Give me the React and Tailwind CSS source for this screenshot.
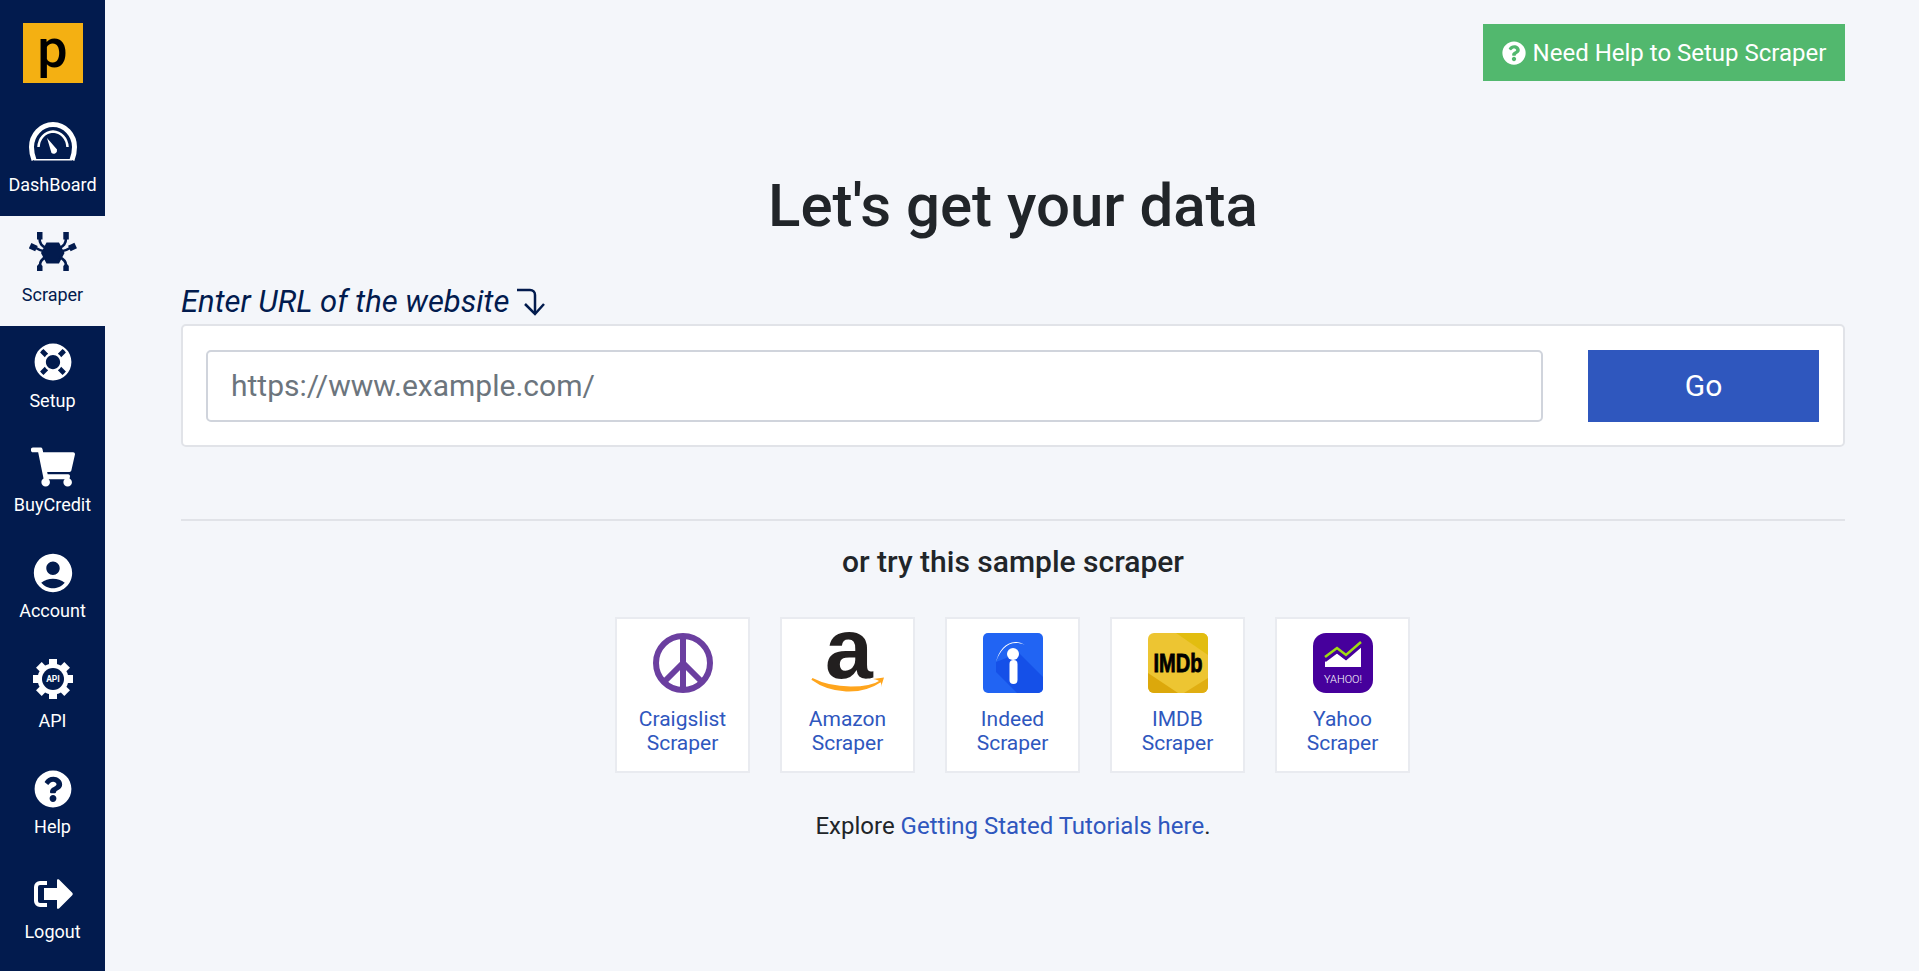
import React from "react";
import { FaLifeRing, FaShoppingCart, FaQuestionCircle } from "react-icons/fa";
import { MdAccountCircle } from "react-icons/md";

const NAVY = "#021b4e";

function Gauge() {
  return (
    <svg width="48" height="39" viewBox="0 0 48 39">
      <path d="M5 38 C3 33 2.500 29.500 2.500 25 C2.500 13 12 2.500 24 2.500 C36 2.500 45.500 13 45.500 25 C45.500 29.500 45 33 43 38" fill="none" stroke="#fff" strokeWidth="5" />
      <path d="M5 37.800 H43" stroke="#fff" strokeWidth="1.400" />
      <path d="M9.500 25 C10 16 16 10 24 9.500 C32 10 38 16 38.500 25" fill="none" stroke="#fff" strokeWidth="2.500" />
      <path d="M18 16 L28 27.500 A3.500 3.500 0 0 1 22.500 31 Z" fill="#fff" />
    </svg>
  );
}

function Spider({ color }) {
  return (
    <svg width="48" height="39" viewBox="0 0 48 39" fill={color}>
      <path d="M17.500 10.500 H30 L35.500 21 L30 31.500 H17.500 L12 21 Z" />
      <g stroke={color} strokeWidth="2.600" fill="none">
        <path d="M10.500 6 C10.500 12 13 14 17 16" />
        <path d="M37 6 C37 12 34.500 14 30.500 16" />
        <path d="M7 16 C10 18 12 19 16 19.500" />
        <path d="M41 16 C38 18 36 19 32 19.500" />
        <path d="M11 33 C11 29 13 27 17 25" />
        <path d="M37 33 C37 29 34.500 27 30.500 25" />
      </g>
      <rect x="8" y="0" width="5.500" height="7.500" />
      <rect x="34.300" y="0" width="5.500" height="7.500" />
      <rect x=".8" y="12" width="7" height="6" transform="rotate(25 4 15)" />
      <rect x="40" y="12" width="7" height="6" transform="rotate(-25 43.500 15)" />
      <path d="M8 34 L10.800 31 L13.500 34 V39 H8 Z" />
      <path d="M34.300 34 L37 31 L39.800 34 V39 H34.300 Z" />
    </svg>
  );
}

function ApiGear() {
  const teeth = [0, 45, 90, 135, 180, 225, 270, 315];
  return (
    <svg width="40" height="40" viewBox="0 0 40 40">
      {teeth.map((a) => (
        <rect key={a} x="16" y="0" width="8" height="8" fill="#fff" transform={`rotate(${a} 20 20)`} />
      ))}
      <circle cx="20" cy="20" r="15.500" fill="#fff" />
      <circle cx="20" cy="20" r="11" fill={NAVY} />
      <text x="20" y="23" textAnchor="middle" fontSize="8.500" fontWeight="700" fill="#fff" fontFamily="Roboto, sans-serif">API</text>
    </svg>
  );
}

function LogoutIcon() {
  return (
    <svg width="40" height="30" viewBox="0 0 40 30">
      <path d="M14 4 H7 C4.800 4 3 5.800 3 8 V22 C3 24.200 4.800 26 7 26 H14" fill="none" stroke="#fff" strokeWidth="4" />
      <path d="M11 9 H24 V1 C24 0 25 0 26 .5 L39 13.500 C40 14.500 40 15.500 39 16.500 L26 29.500 C25 30 24 30 24 29 V21 H11 Z" fill="#fff" />
    </svg>
  );
}

const nav = [
  { label: "DashBoard", icon: <Gauge />, cls: "h-[110px] pt-4 text-white", box: "h-[39px]", gap: "mt-[13px]" },
  { label: "Scraper", icon: <Spider color={NAVY} />, cls: "h-[110px] pt-4 bg-[#f4f6fa] text-[#021b4e]", box: "h-[39px]", gap: "mt-[13px]" },
  { label: "Setup", icon: <FaLifeRing size={38} color="#fff" />, cls: "h-[106px] pt-[17px] text-white", box: "h-[38px]", gap: "mt-[9px]" },
  { label: "BuyCredit", icon: <FaShoppingCart size={44} color="#fff" />, cls: "h-[106px] pt-[15px] text-white", box: "h-[40px]", gap: "mt-[7px]" },
  { label: "Account", icon: <MdAccountCircle size={46} color="#fff" />, cls: "h-[106px] pt-4 text-white", box: "h-[38px]", gap: "mt-[8px]" },
  { label: "API", icon: <ApiGear />, cls: "h-[110px] pt-[15px] text-white", box: "h-[40px]", gap: "mt-[11px]" },
  { label: "Help", icon: <FaQuestionCircle size={38} color="#fff" />, cls: "h-[106px] pt-4 text-white", box: "h-[38px]", gap: "mt-[8px]" },
  { label: "Logout", icon: <LogoutIcon />, cls: "h-[111px] pt-[19px] text-white", box: "h-[30px]", gap: "mt-[12px]" },
];

function Peace() {
  return (
    <svg width="60" height="60" viewBox="0 0 60 60" fill="none" stroke="#6b3fa0">
      <circle cx="30" cy="30" r="27" strokeWidth="6" />
      <path d="M30 3 V57 M30 30 L11 49 M30 30 L49 49" strokeWidth="6" />
    </svg>
  );
}

function Amazon() {
  return (
    <svg width="74" height="60" viewBox="0 0 74 60" className="overflow-visible">
      <text x="38" y="45" textAnchor="middle" fontSize="86" fontWeight="700" fill="#221f1f" fontFamily="'Liberation Sans', sans-serif">a</text>
      <path d="M1 46 C20 60 50 62 70 48 C58 56 24 58 1 46 Z" fill="#ffa51d" stroke="#ffa51d" strokeWidth="2" />
      <path d="M62 46 L73 44.500 L70 54 C71 50 70 47.500 62 46 Z" fill="#ffa51d" />
    </svg>
  );
}

function Indeed() {
  return (
    <svg width="60" height="60" viewBox="0 0 60 60">
      <rect width="60" height="60" rx="5" fill="#2164f3" />
      <path d="M13 29 L36 20 L60 44 V55 A5 5 0 0 1 55 60 H34 L13 39 Z" fill="#1550e8" />
      <path d="M13 29 C16 15 28 3 42 12 C28 6 18 14 13 29 Z" fill="#fff" />
      <circle cx="30" cy="21" r="6" fill="#fff" />
      <rect x="26.500" y="27" width="8" height="24" rx="4" fill="#fff" />
    </svg>
  );
}

function Imdb() {
  return (
    <svg width="60" height="60" viewBox="0 0 60 60" className="overflow-visible">
      <rect width="60" height="60" rx="6" fill="#edc532" />
      <path d="M28 0 H54 A6 6 0 0 1 60 6 V22 Z" fill="#e2bd10" />
      <path d="M0 40 L30 60 H6 A6 6 0 0 1 0 54 Z" fill="#dca80b" />
      <path d="M60 45 L36 60 H54 A6 6 0 0 0 60 54 Z" fill="#e0ae12" />
      <text x="30" y="39" textAnchor="middle" fontSize="26" fontWeight="700" fill="#000" stroke="#000" strokeWidth=".8" fontFamily="'Liberation Sans', sans-serif" textLength="49" lengthAdjust="spacingAndGlyphs">IMDb</text>
    </svg>
  );
}

function Yahoo() {
  return (
    <svg width="60" height="60" viewBox="0 0 60 60">
      <rect width="60" height="60" rx="13" fill="#46009c" />
      <path d="M12 34 L12 27 L24 20 L33 27 L48 13 V34 Z" fill="#fff" />
      <path d="M12 24 L24 15 L33 22 L48 9" fill="none" stroke="#9fdc12" strokeWidth="2.500" />
      <path d="M12 28 L24 19 L33 26 L48 13" fill="none" stroke="#46009c" strokeWidth="2.500" />
      <text x="30" y="50" textAnchor="middle" fontSize="11" fill="#fff" fontFamily="Roboto, sans-serif" fontWeight="300" textLength="38" lengthAdjust="spacingAndGlyphs">YAHOO!</text>
    </svg>
  );
}

const samples = [
  { name: "Craigslist", icon: <Peace /> },
  { name: "Amazon", icon: <Amazon /> },
  { name: "Indeed", icon: <Indeed /> },
  { name: "IMDB", icon: <Imdb /> },
  { name: "Yahoo", icon: <Yahoo /> },
];

export default function App() {
  return (
    <div className="flex h-[971px] overflow-hidden bg-[#f4f6fa] font-['Roboto',sans-serif] text-[#212529]">
      <aside className="w-[105px] shrink-0 bg-[#021b4e] flex flex-col">
        <div className="h-[106px] pt-[23px] flex justify-center">
          <div className="w-[60px] h-[60px] bg-[#f4b012] flex items-center justify-center text-[54px] font-medium leading-none text-black pb-2">p</div>
        </div>
        {nav.map((n) => (
          <a key={n.label} className={`flex flex-col items-center shrink-0 ${n.cls}`}>
            <span className={`flex items-center justify-center ${n.box}`}>{n.icon}</span>
            <span className={`text-[18px] leading-[22px] ${n.gap}`}>{n.label}</span>
          </a>
        ))}
      </aside>
      <main className="flex-1 pl-[76px] pr-[74px] pt-6">
        <div className="flex justify-end">
          <a className="w-[362px] h-[57px] bg-[#52b86e] text-white text-[24px] flex items-center justify-center gap-[7px]">
            <FaQuestionCircle size={24} />
            Need Help to Setup Scraper
          </a>
        </div>
        <h1 className="mt-[89px] text-center text-[60px] leading-[72px] font-medium">Let's get your data</h1>
        <div className="mt-[40px] h-[50px] flex items-start text-[#021b4e]">
          <span className="italic text-[31px] leading-[40px]">Enter URL of the website</span>
          <svg className="ml-[8px] mt-[6px]" width="28" height="28" viewBox="0 0 28 28" fill="none" stroke="#021b4e" strokeWidth="2.500">
            <path d="M0 2 H13 C16 2 18 4 18 7 V25" />
            <path d="M8 16 L18 26 L27 16" />
          </svg>
        </div>
        <div className="-mt-[8px] h-[123px] bg-white border-2 border-[#e1e3e8] rounded-[5px] flex items-center pl-[23px] pr-[24px]">
          <input
            placeholder="https://www.example.com/"
            className="w-[1337px] h-[72px] rounded-[5px] border-2 border-[#d0d4dc] bg-white px-[23px] text-[30px] font-['Roboto',sans-serif] outline-none placeholder:text-[#6c757d]"
          />
          <button className="ml-[45px] w-[231px] h-[72px] bg-[#2f57be] text-white text-[30px]">Go</button>
        </div>
        <hr className="mt-[72px] border-0 h-[2px] bg-[#e1e3e8]" />
        <h2 className="mt-[23px] text-center text-[30px] leading-[36px] font-medium">or try this sample scraper</h2>
        <div className="mt-[37px] pr-[1px] flex justify-center gap-[30px]">
          {samples.map((s) => (
            <a key={s.name} className="w-[135px] h-[156px] bg-white border-2 border-[#e9ebf0] flex flex-col items-center pt-[14px] text-[21px] leading-[24px] text-[#2f57be] text-center">
              <span className="h-[60px] flex items-center justify-center">{s.icon}</span>
              <span className="mt-[14px]">{s.name}<br />Scraper</span>
            </a>
          ))}
        </div>
        <p className="mt-[38px] text-center text-[24px] leading-[30px]">
          Explore <a className="text-[#2f57be]">Getting Stated Tutorials here</a>.
        </p>
      </main>
    </div>
  );
}
